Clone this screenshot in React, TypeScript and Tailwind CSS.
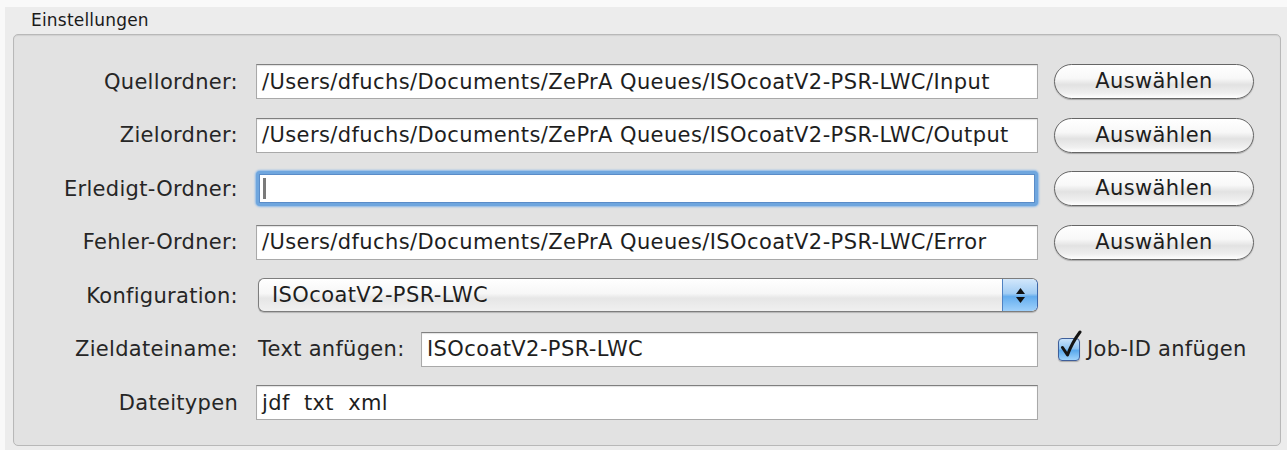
import React from "react";

const FONT = { fontFamily: '"DejaVu Sans", "Liberation Sans", sans-serif' };

function Label({ children }: { children: React.ReactNode }) {
  return (
    <div className="flex items-center justify-end pt-[2px] text-[21px] tracking-[0.3px] text-[#262626] whitespace-nowrap">
      {children}
    </div>
  );
}

function TextField({ value, focused }: { value: string; focused?: boolean }) {
  if (focused) {
    return (
      <div className="h-[35px] rounded-[4px] p-[3px] bg-[#6fa6de] shadow-[0_0_2px_1px_#8ab8e8]">
        <div className="h-full bg-white border border-[#5a8cc8] flex items-center pl-[3px]">
          <div className="w-[3px] h-[21px] bg-[#7a7a7a]" />
        </div>
      </div>
    );
  }
  return (
    <div className="h-[35px] bg-white border border-[#a9a9a9] border-t-[#7f7f7f] shadow-[inset_0_1px_1px_rgba(0,0,0,0.12)] flex items-center pl-[5px] pt-[2px] text-[21px] tracking-[0.4px] text-[#1e1e1e] whitespace-pre overflow-hidden">
      {value}
    </div>
  );
}

function PillButton({ label }: { label: string }) {
  return (
    <div className="h-[35px] w-[200px] rounded-full border border-[#666666] bg-[linear-gradient(to_bottom,#ffffff_0%,#f8f8f8_40%,#e2e2e2_60%,#efefef_85%,#ffffff_100%)] shadow-[0_1px_1px_rgba(0,0,0,0.25)] flex items-center justify-center pt-[1px] text-[21px] tracking-[0.4px] text-[#1e1e1e]">
      {label}
    </div>
  );
}

function Stepper() {
  return (
    <div className="w-[35px] h-full rounded-r-[5px] border-l border-[#4f82c2] bg-[linear-gradient(to_bottom,#d2e7fb_0%,#a2cdf4_45%,#64adee_55%,#9ed0fb_100%)] flex flex-col items-center justify-center gap-[3px]">
      <svg width="9" height="6" viewBox="0 0 9 6">
        <path d="M4.5 0 L9 6 L0 6 Z" fill="#111" />
      </svg>
      <svg width="9" height="6" viewBox="0 0 9 6">
        <path d="M0 0 L9 0 L4.5 6 Z" fill="#111" />
      </svg>
    </div>
  );
}

function Select({ value }: { value: string }) {
  return (
    <div className="ml-[2px] h-[34px] rounded-[6px] border border-[#7d7d7d] border-r-[#3d66a8] bg-[linear-gradient(to_bottom,#ffffff_0%,#f7f7f7_45%,#e6e6e6_60%,#f0f0f0_100%)] shadow-[0_1px_1px_rgba(0,0,0,0.2)] flex items-center overflow-hidden">
      <div className="flex-1 pl-[13px] pt-[1px] text-[21px] tracking-[0.4px] text-[#1e1e1e]">{value}</div>
      <Stepper />
    </div>
  );
}

function Checkbox() {
  return (
    <div className="relative w-[22px] h-[23px]">
      <div className="absolute inset-0 rounded-[4px] border border-[#3f5f9a] bg-[linear-gradient(to_bottom,#c9e3fb_0%,#8fc4f2_45%,#5aa9ec_55%,#9fd3fc_100%)] shadow-[0_1px_1px_rgba(0,0,0,0.25)]" />
      <svg
        className="absolute left-0 top-[-8px]"
        width="26"
        height="32"
        viewBox="0 0 26 32"
      >
        <path
          d="M4.5 17.5 L9.5 25 C12 18 16 10 22 2"
          fill="none"
          stroke="#151515"
          strokeWidth="3"
          strokeLinecap="round"
          strokeLinejoin="round"
        />
      </svg>
    </div>
  );
}

export default function App() {
  const rows: { label: string; value: string; focused?: boolean }[] = [
    { label: "Quellordner:", value: "/Users/dfuchs/Documents/ZePrA Queues/ISOcoatV2-PSR-LWC/Input" },
    { label: "Zielordner:", value: "/Users/dfuchs/Documents/ZePrA Queues/ISOcoatV2-PSR-LWC/Output" },
    { label: "Erledigt-Ordner:", value: "", focused: true },
    { label: "Fehler-Ordner:", value: "/Users/dfuchs/Documents/ZePrA Queues/ISOcoatV2-PSR-LWC/Error" },
  ];

  return (
    <div
      className="w-[1287px] h-[450px] bg-[#f9f9f9] pl-[5px] pt-[7px] overflow-hidden"
      style={FONT}
    >
      <div className="h-full bg-[#ececec] pl-[8px] pr-[6px] flex flex-col">
        <div className="h-[27px] pl-[18px] text-[17px] tracking-[0.2px] leading-[27px] text-[#1a1a1a]">
          Einstellungen
        </div>
        <div className="h-[412px] rounded-[5px] border border-[#b8b8b8] bg-[#e2e2e2] shadow-[inset_0_1px_1px_rgba(0,0,0,0.08)] pt-[29px]">
          <div className="grid grid-cols-[224px_784px_200px] gap-x-[16px] gap-y-[18.5px] auto-rows-[35px]">
            {rows.map((r) => (
              <React.Fragment key={r.label}>
                <Label>{r.label}</Label>
                <div className="pl-[2px]">
                  <TextField value={r.value} focused={r.focused} />
                </div>
                <PillButton label="Auswählen" />
              </React.Fragment>
            ))}

            <Label>Konfiguration:</Label>
            <div className="pl-[2px]">
              <Select value="ISOcoatV2-PSR-LWC" />
            </div>
            <div />

            <Label>Zieldateiname:</Label>
            <div className="pl-[2px] flex items-center">
              <div className="pl-[2px] pt-[2px] w-[165px] text-[21px] tracking-[0.3px] text-[#262626] whitespace-nowrap">
                Text anfügen:
              </div>
              <div className="flex-1">
                <TextField value="ISOcoatV2-PSR-LWC" />
              </div>
            </div>
            <div className="flex items-center pl-[4px] gap-[7px]">
              <Checkbox />
              <span className="pt-[2px] text-[21px] tracking-[0.3px] text-[#262626] whitespace-nowrap">Job-ID anfügen</span>
            </div>

            <Label>Dateitypen</Label>
            <div className="pl-[2px]">
              <TextField value="jdf  txt  xml" />
            </div>
            <div />
          </div>
        </div>
      </div>
    </div>
  );
}
